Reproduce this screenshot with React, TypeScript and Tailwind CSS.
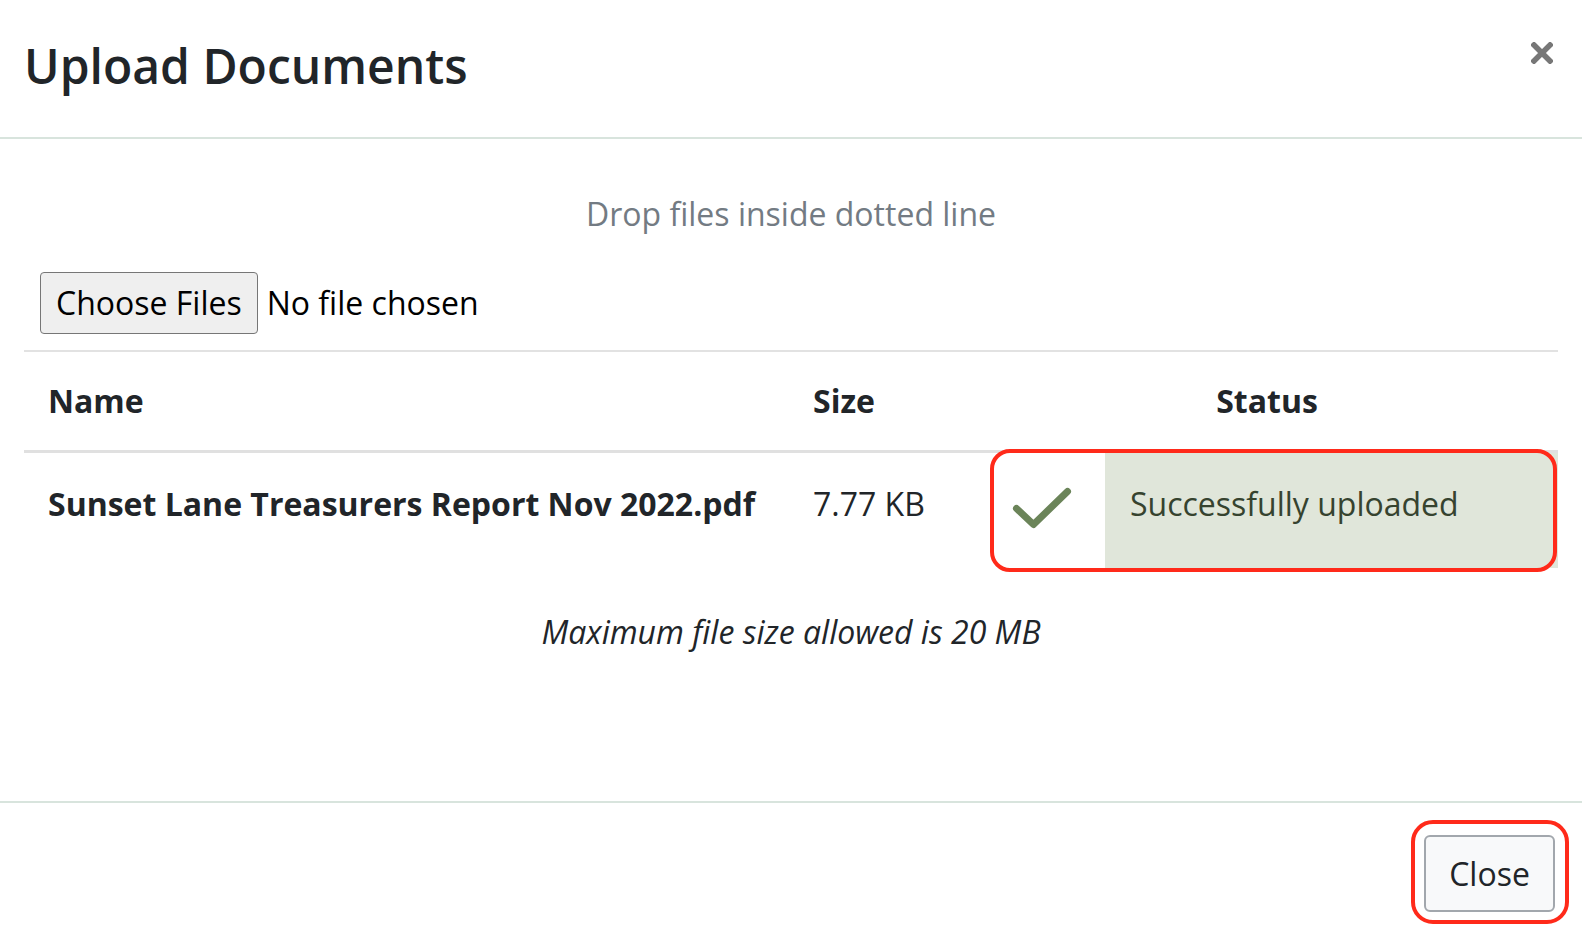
import React from "react";

export default function App() {
  return (
    <div className="relative w-[1582px] h-[938px] bg-white text-[#212529] font-['Open_Sans',sans-serif] overflow-hidden flex flex-col">
      {/* Header */}
      <div className="h-[139px] shrink-0 border-b-2 border-[#d8e4dd] flex items-start justify-between pl-[24px] pr-[28px]">
        <h4 className="mt-[34px] text-[48px] leading-[64px] font-semibold tracking-[0px]">Upload Documents</h4>
        <button className="mt-[41px] w-[24px] h-[24px] flex items-center justify-center">
          <svg width="22" height="22" viewBox="0 0 22 22">
            <path d="M3 3 L19 19 M19 3 L3 19" stroke="#777777" strokeWidth="5.5" strokeLinecap="square" />
          </svg>
        </button>
      </div>

      {/* Body */}
      <div className="flex-1 px-[24px] flex flex-col">
        <div className="mt-[53px] h-[44px] leading-[44px] text-center text-[32px] text-[#737b83]">
          Drop files inside dotted line
        </div>
        <div className="mt-[36px] flex items-center pl-[16px] h-[62px]">
          <span className="h-[62px] px-[15px] flex items-center bg-[#efefef] border border-[#767676] rounded-[4px] text-[32px] text-black">
            Choose Files
          </span>
          <span className="ml-[9px] text-[32px] text-black">No file chosen</span>
        </div>
        <table className="mt-[16px] w-full border-collapse table-fixed">
          <colgroup>
            <col className="w-[765px]" />
            <col className="w-[205px]" />
            <col className="w-[111px]" />
            <col />
          </colgroup>
          <thead>
            <tr className="h-[100px] border-t-2 border-[#e2e2e2] border-b-[3px] border-b-[#e0e0e0]">
              <th className="text-left pl-[24px] text-[32px] font-bold">Name</th>
              <th className="text-left pl-[24px] text-[32px] font-bold">Size</th>
              <th colSpan={2} className="text-center pr-[18px] text-[32px] font-bold">Status</th>
            </tr>
          </thead>
          <tbody>
            <tr className="h-[117px]">
              <td className="pl-[24px] text-[32px] font-bold pb-[12px] whitespace-nowrap">
                Sunset Lane Treasurers Report Nov 2022.pdf
              </td>
              <td className="pl-[24px] text-[32px] pb-[12px]">7.77 KB</td>
              <td className="bg-white">
                <div className="flex items-center justify-center pb-[12px]">
                  <svg width="64" height="56" viewBox="0 0 64 56" className="ml-[-16px]">
                    <path d="M6.5 32.5 L23.5 48.5 L57.5 15.5" fill="none" stroke="#6b8459" strokeWidth="7" strokeLinecap="round" strokeLinejoin="round" />
                  </svg>
                </div>
              </td>
              <td className="bg-[#e0e6da] pl-[25px] text-[32px] text-[#36432f] pb-[12px]">Successfully uploaded</td>
            </tr>
          </tbody>
        </table>
        <div className="mt-[40px] text-center italic text-[32px]">Maximum file size allowed is 20 MB</div>
      </div>

      {/* Footer */}
      <div className="h-[137px] shrink-0 border-t-2 border-[#d8e4dd] flex items-start justify-end pr-[27px] pt-[32px]">
        <button className="w-[131px] h-[77px] bg-[#f8f9fa] border-2 border-[#a2a7ad] rounded-[6px] text-[32px] text-[#212529]">
          Close
        </button>
      </div>

      {/* Annotation overlays */}
      <div className="absolute left-[990px] top-[449px] w-[567px] h-[123px] border-[4px] border-[#ff2a1a] rounded-[20px] pointer-events-none" />
      <div className="absolute left-[1411px] top-[820px] w-[158px] h-[104px] border-[4px] border-[#ff2a1a] rounded-[22px] pointer-events-none" />
    </div>
  );
}
